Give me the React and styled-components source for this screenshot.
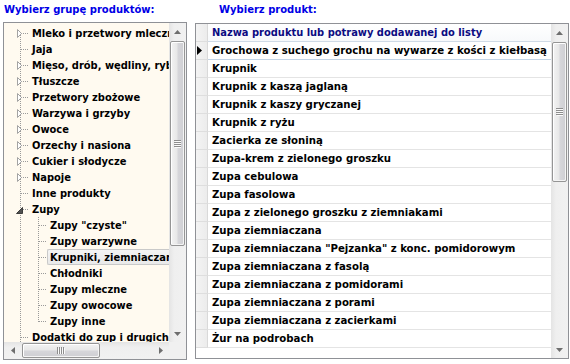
import React from 'react';
import styled, { createGlobalStyle, css } from 'styled-components';

const GlobalStyle = createGlobalStyle`
  html, body { margin: 0; padding: 0; background: #ffffff; }
  body { width: 570px; height: 364px; overflow: hidden; }
  #root { width: 570px; height: 364px; }
`;

const Page = styled.div`
  width: 570px;
  height: 364px;
  box-sizing: border-box;
  display: flex;
  align-items: flex-start;
  gap: 8px;
  padding: 4px 0 0 3px;
  font-family: "DejaVu Sans Condensed", "DejaVu Sans", sans-serif;
  font-stretch: condensed;
`;

const Column = styled.div`
  display: flex;
  flex-direction: column;
  width: ${p => p.$width}px;
  flex: none;
`;

const Title = styled.div`
  font-family: "DejaVu Sans", sans-serif;
  font-stretch: normal;
  font-weight: bold;
  font-size: 10px;
  line-height: 12px;
  height: 12px;
  color: #0000e6;
  padding-left: ${p => p.$indent}px;
  white-space: nowrap;
`;

const Panel = styled.div`
  margin-top: ${p => p.$gap}px;
  height: ${p => p.$height}px;
  box-sizing: border-box;
  border: 1px solid #8f9196;
  background: ${p => p.$bg};
  display: grid;
  grid-template-columns: 1fr 17px;
  grid-template-rows: ${p => (p.$hscroll ? '1fr 17px' : '1fr')};
  overflow: hidden;
`;

/* ---------- Tree ---------- */

const TreeViewport = styled.div`
  overflow: hidden;
  padding-top: 2px;
  min-width: 0;
`;

const TreeRowEl = styled.div`
  display: flex;
  height: 16px;
  white-space: nowrap;
`;

const Gutter = styled.svg`
  flex: none;
  display: block;
`;

const TreeLabel = styled.span`
  display: flex;
  align-items: center;
  box-sizing: border-box;
  height: 16px;
  padding: 0 3px;
  font-weight: bold;
  font-size: 11px;
  color: #000;
  ${p => p.$selected && css`
    padding: 0 2px;
    background: linear-gradient(#f4f4f4, #e9e9e9);
    border: 1px solid #c9c9c9;
    border-right: none;
    border-radius: 2px 0 0 2px;
  `}
`;

const DOT = '#9a9a9a';

function TreeRow({ item }) {
  const { level, kind, label, selected, lastChild, first } = item;
  const w = level === 0 ? 25 : 43;
  return (
    <TreeRowEl>
      <Gutter width={w} height={16} viewBox={`0 0 ${w} 16`} shapeRendering="crispEdges">
        <line x1="16.5" y1={first ? 8 : 0} x2="16.5" y2="16" stroke={DOT} strokeDasharray="1 1" />
        {level === 0 && (
          <line x1="17" y1="8.5" x2="25" y2="8.5" stroke={DOT} strokeDasharray="1 1" />
        )}
        {level === 1 && (
          <>
            <line x1="34.5" y1="0" x2="34.5" y2={lastChild ? 9 : 16} stroke={DOT} strokeDasharray="1 1" />
            <line x1="35" y1="8.5" x2="43" y2="8.5" stroke={DOT} strokeDasharray="1 1" />
          </>
        )}
        {kind === 'collapsed' && (
          <polygon points="13.5,4.5 13.5,12.5 17.5,8.5" fill="#ffffff" stroke="#a3a3a3" shapeRendering="geometricPrecision" />
        )}
        {kind === 'expanded' && (
          <polygon points="18.5,6.5 18.5,12.5 12.5,12.5" fill="#505050" stroke="#3c3c3c" shapeRendering="geometricPrecision" />
        )}
      </Gutter>
      <TreeLabel $selected={selected}>{label}</TreeLabel>
    </TreeRowEl>
  );
}

const treeItems = [
  { level: 0, kind: 'collapsed', label: 'Mleko i przetwory mleczne', first: true },
  { level: 0, kind: 'leaf', label: 'Jaja' },
  { level: 0, kind: 'collapsed', label: 'Mięso, drób, wędliny, ryby' },
  { level: 0, kind: 'collapsed', label: 'Tłuszcze' },
  { level: 0, kind: 'collapsed', label: 'Przetwory zbożowe' },
  { level: 0, kind: 'collapsed', label: 'Warzywa i grzyby' },
  { level: 0, kind: 'collapsed', label: 'Owoce' },
  { level: 0, kind: 'collapsed', label: 'Orzechy i nasiona' },
  { level: 0, kind: 'collapsed', label: 'Cukier i słodycze' },
  { level: 0, kind: 'collapsed', label: 'Napoje' },
  { level: 0, kind: 'leaf', label: 'Inne produkty' },
  { level: 0, kind: 'expanded', label: 'Zupy' },
  { level: 1, kind: 'leaf', label: 'Zupy "czyste"' },
  { level: 1, kind: 'leaf', label: 'Zupy warzywne' },
  { level: 1, kind: 'leaf', label: 'Krupniki, ziemniaczane', selected: true },
  { level: 1, kind: 'leaf', label: 'Chłodniki' },
  { level: 1, kind: 'leaf', label: 'Zupy mleczne' },
  { level: 1, kind: 'leaf', label: 'Zupy owocowe' },
  { level: 1, kind: 'leaf', label: 'Zupy inne', lastChild: true },
  { level: 0, kind: 'leaf', label: 'Dodatki do zup i drugich dań' },
];

/* ---------- Scrollbars ---------- */

const VScroll = styled.div`
  display: flex;
  flex-direction: column;
  width: 17px;
  min-height: 0;
  background: linear-gradient(to right, #e4e4e4, #efefef 30%, #f1f1f1);
`;

const HScroll = styled.div`
  display: flex;
  height: 17px;
  min-width: 0;
  background: linear-gradient(#e4e4e4, #efefef 30%, #f1f1f1);
`;

const Corner = styled.div`
  background: #f0f0f0;
`;

const ArrowBtn = styled.div`
  flex: none;
  width: 17px;
  height: 17px;
  display: flex;
  align-items: center;
  justify-content: center;
  ${p => p.$end && css`margin-${p.$horizontal ? 'left' : 'top'}: auto;`}
`;

const VThumb = styled.div`
  flex: none;
  box-sizing: border-box;
  margin: ${p => p.$offset}px 0 0 1px;
  width: 15px;
  height: ${p => p.$size}px;
  border: 1px solid #959595;
  border-radius: 2px;
  background: linear-gradient(to right, #f3f3f3, #e8e8e8 45%, #d6d6da 55%, #cfcfd3);
  box-shadow: inset 1px 1px 0 #ffffff, inset -1px -1px 0 #f4f4f4;
  display: flex;
  align-items: center;
  justify-content: center;
`;

const HThumb = styled.div`
  flex: none;
  box-sizing: border-box;
  margin: 1px 0 0 ${p => p.$offset}px;
  height: 15px;
  width: ${p => p.$size}px;
  border: 1px solid #959595;
  border-radius: 2px;
  background: linear-gradient(#f3f3f3, #e8e8e8 45%, #d6d6da 55%, #cfcfd3);
  box-shadow: inset 1px 1px 0 #ffffff, inset -1px -1px 0 #f4f4f4;
  display: flex;
  align-items: center;
  justify-content: center;
`;

const Arrow = ({ dir }) => {
  const pts = {
    up: '0,4 3.5,0 7,4',
    down: '0,0 7,0 3.5,4',
    left: '4,0 4,7 0,3.5',
    right: '0,0 0,7 4,3.5',
  }[dir];
  const horiz = dir === 'left' || dir === 'right';
  return (
    <svg width={horiz ? 4 : 7} height={horiz ? 7 : 4} viewBox={horiz ? '0 0 4 7' : '0 0 7 4'}>
      <polygon points={pts} fill="#6e6e6e" />
    </svg>
  );
};

const GripV = () => (
  <svg width="7" height="8" viewBox="0 0 7 8" shapeRendering="crispEdges">
    {[0, 2, 4, 6].map(y => (
      <g key={y}>
        <line x1="0" y1={y + 0.5} x2="7" y2={y + 0.5} stroke="#8d8d8d" />
        <line x1="1" y1={y + 1.5} x2="7" y2={y + 1.5} stroke="#fbfbfb" />
      </g>
    ))}
  </svg>
);

const GripH = () => (
  <svg width="8" height="7" viewBox="0 0 8 7" shapeRendering="crispEdges">
    {[0, 2, 4, 6].map(x => (
      <g key={x}>
        <line x1={x + 0.5} y1="0" x2={x + 0.5} y2="7" stroke="#8d8d8d" />
        <line x1={x + 1.5} y1="1" x2={x + 1.5} y2="7" stroke="#fbfbfb" />
      </g>
    ))}
  </svg>
);

function VerticalScrollbar({ offset, size }) {
  return (
    <VScroll>
      <ArrowBtn><Arrow dir="up" /></ArrowBtn>
      <VThumb $offset={offset} $size={size}><GripV /></VThumb>
      <ArrowBtn $end><Arrow dir="down" /></ArrowBtn>
    </VScroll>
  );
}

function HorizontalScrollbar({ offset, size }) {
  return (
    <HScroll>
      <ArrowBtn><Arrow dir="left" /></ArrowBtn>
      <HThumb $offset={offset} $size={size}><GripH /></HThumb>
      <ArrowBtn $end $horizontal><Arrow dir="right" /></ArrowBtn>
    </HScroll>
  );
}

/* ---------- Grid ---------- */

const GridBody = styled.div`
  display: flex;
  flex-direction: column;
  min-width: 0;
  overflow: hidden;
`;

const GridRow = styled.div`
  display: grid;
  grid-template-columns: 12px 1fr;
  height: 18px;
  flex: none;
`;

const Indicator = styled.div`
  box-sizing: border-box;
  background: linear-gradient(to right, #f4f4f4, #ececec);
  border-right: 1px solid #d9d9d9;
  border-bottom: 1px solid #dedede;
  display: flex;
  align-items: center;
  padding-left: 1px;
`;

const Cell = styled.div`
  box-sizing: border-box;
  padding-left: 4px;
  font-weight: bold;
  font-size: ${p => (p.$header ? '11px' : '11.3px')};
  line-height: 17px;
  white-space: nowrap;
  overflow: hidden;
  color: ${p => (p.$header ? '#0c0c82' : '#000000')};
  border-bottom: 1px solid ${p => (p.$header ? '#cfdae6' : p.$current ? '#c3d4e6' : '#e4e4e4')};
  background: ${p => (p.$header ? 'linear-gradient(#ffffff, #f7f9fb)' : '#ffffff')};
`;

const products = [
  'Grochowa z suchego grochu na wywarze z kości z kiełbasą',
  'Krupnik',
  'Krupnik z kaszą jaglaną',
  'Krupnik z kaszy gryczanej',
  'Krupnik z ryżu',
  'Zacierka ze słoniną',
  'Zupa-krem z zielonego groszku',
  'Zupa cebulowa',
  'Zupa fasolowa',
  'Zupa z zielonego groszku z ziemniakami',
  'Zupa ziemniaczana',
  'Zupa ziemniaczana "Pejzanka" z konc. pomidorowym',
  'Zupa ziemniaczana z fasolą',
  'Zupa ziemniaczana z pomidorami',
  'Zupa ziemniaczana z porami',
  'Zupa ziemniaczana z zacierkami',
  'Żur na podrobach',
];

const CurrentMark = () => (
  <svg width="5" height="9" viewBox="0 0 5 9">
    <polygon points="0,0 5,4.5 0,9" fill="#000" />
  </svg>
);

export default function App() {
  return (
    <>
      <GlobalStyle />
      <Page>
        <Column $width={184}>
          <Title $indent={1}>Wybierz grupę produktów:</Title>
          <Panel $gap={6} $height={338} $bg="#fffaf0" $hscroll>
            <TreeViewport>
              {treeItems.map((it, i) => (
                <TreeRow key={i} item={it} />
              ))}
            </TreeViewport>
            <VerticalScrollbar offset={1} size={205} />
            <HorizontalScrollbar offset={1} size={78} />
            <Corner />
          </Panel>
        </Column>
        <Column $width={374}>
          <Title $indent={24}>Wybierz produkt:</Title>
          <Panel $gap={7} $height={336} $bg="#ffffff">
            <GridBody>
              <GridRow>
                <Indicator />
                <Cell $header>Nazwa produktu lub potrawy dodawanej do listy</Cell>
              </GridRow>
              {products.map((p, i) => (
                <GridRow key={i}>
                  <Indicator>{i === 0 && <CurrentMark />}</Indicator>
                  <Cell $current={i === 0}>{p}</Cell>
                </GridRow>
              ))}
            </GridBody>
            <VerticalScrollbar offset={1} size={140} />
          </Panel>
        </Column>
      </Page>
    </>
  );
}
